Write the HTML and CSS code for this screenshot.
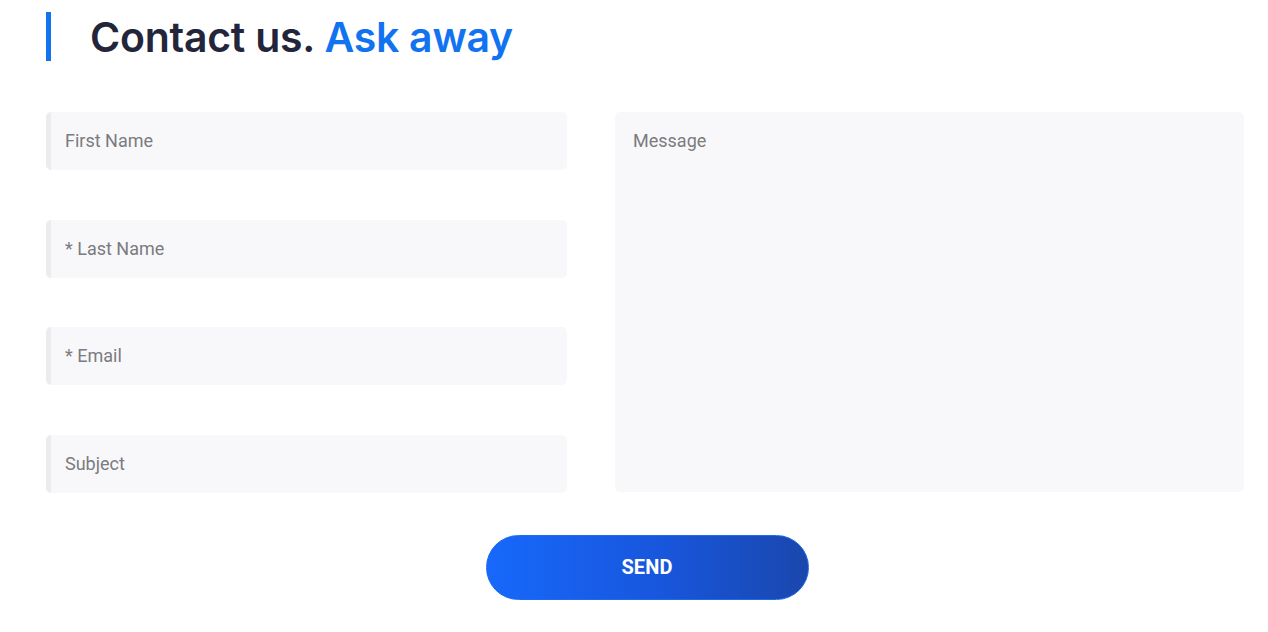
FILE: index.html
```html
<!DOCTYPE html>
<html>
<head>
<meta charset="utf-8">
<link rel="stylesheet" href="styles.css">
</head>
<body>
<section class="contact">
  <h1 class="title"><span class="title-dark">Contact us.</span> <span class="title-blue">Ask away</span></h1>
  <form class="form">
    <div class="fields">
      <div class="col-left">
        <input class="field" type="text" placeholder="First Name">
        <input class="field" type="text" placeholder="* Last Name">
        <input class="field" type="text" placeholder="* Email">
        <input class="field" type="text" placeholder="Subject">
      </div>
      <textarea class="message" placeholder="Message"></textarea>
    </div>
    <div class="actions">
      <button class="send" type="button">SEND</button>
    </div>
  </form>
</section>
</body>
</html>
```
FILE: styles.css
```css
* { box-sizing: border-box; }
html, body { margin: 0; padding: 0; background: #fff; }
body { font-family: Roboto, "Liberation Sans", sans-serif; }

.contact {
  width: 1198px;
  margin-left: 46px;
  padding-top: 12px;
}

.title {
  margin: 0;
  height: 49px;
  border-left: 5px solid #1273f0;
  padding-left: 39px;
  font-family: Inter, "Liberation Sans", sans-serif;
  font-weight: 600;
  font-size: 41px;
  line-height: 50px;
  letter-spacing: -0.25px;
}
.title-dark { color: #23263a; }
.title-blue { color: #1273f0; }

.form { margin-top: 51px; }

.fields {
  display: grid;
  grid-template-columns: 521px 629px;
  column-gap: 48px;
}

.col-left {
  display: flex;
  flex-direction: column;
  gap: 49.7px;
}

.field, .message {
  display: block;
  width: 100%;
  background: #f8f8fa;
  border: none;
  border-radius: 5px;
  font-family: Roboto, "Liberation Sans", sans-serif;
  font-size: 18px;
  color: #333;
  outline: none;
}
.field {
  height: 58px;
  border-left: 5px solid #ececef;
  padding: 0 14px 1px;
}
.message {
  height: 380px;
  padding: 18px 18px;
  resize: none;
  line-height: 22px;
}
.field::placeholder, .message::placeholder { color: #7b7b80; }

.actions {
  display: flex;
  justify-content: center;
  padding-left: 4px;
  margin-top: 42px;
}
.send {
  width: 323px;
  height: 65px;
  border: 1px solid #1a6cf0;
  border-radius: 33px;
  background: linear-gradient(90deg, #1768fb 0%, #1856dc 55%, #1a47ad 100%);
  color: #fff;
  font-family: Roboto, "Liberation Sans", sans-serif;
  font-weight: 700;
  font-size: 20px;
  line-height: 22px;
  padding-bottom: 2px;
  letter-spacing: 0.1px;
  cursor: pointer;
}
```
